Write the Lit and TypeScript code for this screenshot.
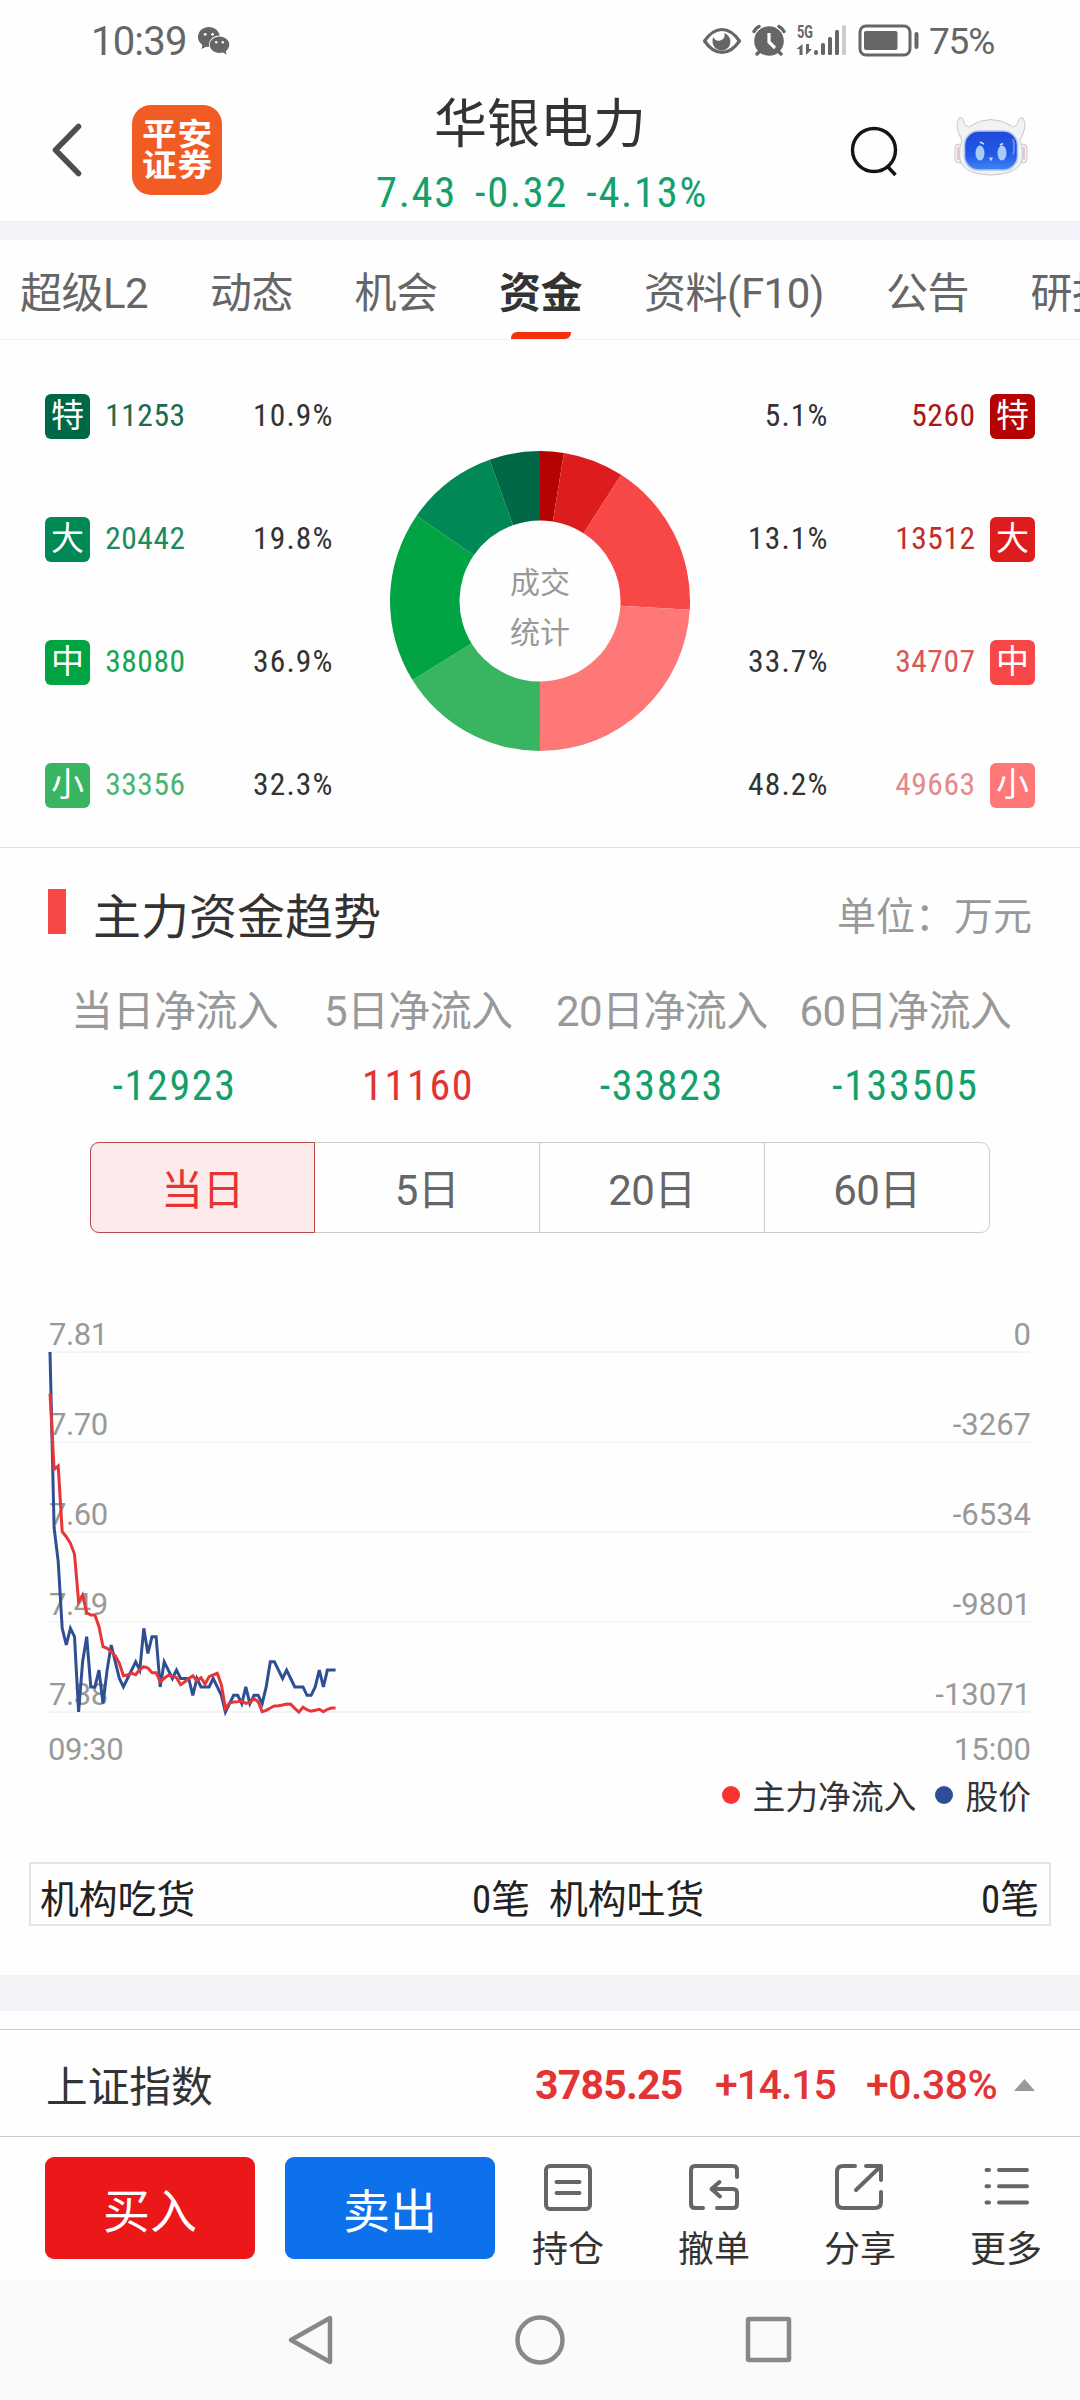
import { LitElement, html, svg, css } from 'lit';
import { customElement, property } from 'lit/decorators.js';
import { classMap } from 'lit/directives/class-map.js';

interface FlowItem {
  tag: string;
  value: number;
  percent: string;
  color: string;
  text: string;
}

const OUTFLOW: FlowItem[] = [
  { tag: '特', value: 11253, percent: '10.9%', color: '#006747', text: '#1a6b4f' },
  { tag: '大', value: 20442, percent: '19.8%', color: '#008855', text: '#1c8a5e' },
  { tag: '中', value: 38080, percent: '36.9%', color: '#00a443', text: '#18a553' },
  { tag: '小', value: 33356, percent: '32.3%', color: '#39b562', text: '#4bb56e' },
];

const INFLOW: FlowItem[] = [
  { tag: '特', value: 5260, percent: '5.1%', color: '#b50303', text: '#a81717' },
  { tag: '大', value: 13512, percent: '13.1%', color: '#dd1c1e', text: '#c22e2e' },
  { tag: '中', value: 34707, percent: '33.7%', color: '#f84747', text: '#dd5656' },
  { tag: '小', value: 49663, percent: '48.2%', color: '#ff7878', text: '#e58a8a' },
];

// one sample per minute, from 09:30
const PRICES = [
  7.81, 7.6, 7.56, 7.48, 7.46, 7.48, 7.47, 7.38, 7.44, 7.47, 7.41, 7.41, 7.43, 7.39, 7.43, 7.46, 7.44, 7.42,
  7.41, 7.42, 7.43, 7.44, 7.43, 7.48, 7.45, 7.47, 7.47, 7.41, 7.44, 7.43, 7.42, 7.43, 7.42, 7.42, 7.42, 7.4,
  7.42, 7.41, 7.41, 7.41, 7.42, 7.41, 7.4, 7.38, 7.39, 7.4, 7.4, 7.39, 7.41, 7.39, 7.4, 7.4, 7.39, 7.41,
  7.44, 7.44, 7.43, 7.42, 7.43, 7.42, 7.41, 7.41, 7.41, 7.4, 7.4, 7.41, 7.43, 7.41, 7.43, 7.43, 7.43,
];

const NET_INFLOW = [
  -1501, -4260, -4139, -6524, -6705, -6947, -7334, -9065, -8823, -9464, -9549, -9549, -9973, -10699, -10760,
  -10881, -11038, -11304, -11752, -11728, -11667, -11716, -11522, -11425, -11474, -11643, -11643, -11970,
  -11849, -11740, -11776, -11825, -12079, -11982, -11861, -11752, -11934, -11825, -12055, -11788, -11728,
  -11667, -12091, -12938, -12744, -12708, -12696, -12672, -12757, -12720, -12587, -12696, -13059, -13011,
  -12926, -12853, -12841, -12817, -12781, -12793, -12938, -13071, -12902, -12986, -13047, -13011, -12974,
  -13059, -12974, -12926, -12926,
];

@customElement('flow-donut')
export class FlowDonut extends LitElement {
  @property({ attribute: false })
  items: FlowItem[] = [];

  static styles = css`
    :host {
      display: grid;
      width: 300px;
      height: 300px;
    }

    svg,
    .caption {
      grid-area: 1 / 1;
    }

    .caption {
      place-self: center;
      width: 64px;
      padding-top: 14px;
      font-size: 30px;
      line-height: 50px;
      text-align: center;
      color: #999;
    }
  `;

  private slice(from: number, to: number, color: string) {
    const at = (turn: number, r: number) =>
      `${150 + r * Math.sin(turn * 2 * Math.PI)} ${150 - r * Math.cos(turn * 2 * Math.PI)}`;
    return svg`<path fill=${color} d="M${at(from, 150)} A150 150 0 0 1 ${at(to, 150)} L${at(to, 80.5)} A80.5 80.5 0 0 0 ${at(from, 80.5)} Z"></path>`;
  }

  render() {
    const total = this.items.reduce((sum, item) => sum + item.value, 0);
    let turn = 0;
    return html`
      <svg width="300" height="300" viewBox="0 0 300 300">
        ${this.items.map((item) => {
          const from = turn;
          turn += item.value / total;
          return this.slice(from, turn, item.color);
        })}
      </svg>
      <div class="caption">成交统计</div>
    `;
  }
}

@customElement('trend-chart')
export class TrendChart extends LitElement {
  static styles = css`
    :host {
      display: block;
      height: 450px;
    }

    svg {
      overflow: visible;
    }

    .grid {
      stroke: #f5f5f5;
      stroke-width: 2;
    }

    .axis {
      fill: #999;
      font-size: 31px;
      letter-spacing: -0.4px;
    }

    .end {
      text-anchor: end;
      letter-spacing: 0;
    }

    .line {
      fill: none;
      stroke-width: 3;
      stroke-linejoin: miter;
    }

    .price {
      stroke: #2f4f93;
    }

    .inflow {
      stroke: #e73538;
    }
  `;

  private points(values: number[], max: number, min: number): string {
    return values.map((v, i) => `${(2 + i * 4.08).toFixed(1)},${(32 + ((max - v) / (max - min)) * 360).toFixed(1)}`).join(' ');
  }

  render() {
    const left = ['7.81', '7.70', '7.60', '7.49', '7.38'];
    const right = ['0', '-3267', '-6534', '-9801', '-13071'];
    return html`
      <svg width="984" height="450" viewBox="0 0 984 450">
        ${left.map(
          (label, i) => svg`
            <line class="grid" x1="0" x2="983" y1=${32 + i * 90} y2=${32 + i * 90}></line>
            <text class="axis" x="1" y=${24.5 + i * 90}>${label}</text>
            <text class="axis end" x="983" y=${24.5 + i * 90}>${right[i]}</text>
          `
        )}
        <text class="axis" x="0" y="440">09:30</text>
        <text class="axis end" x="983" y="440">15:00</text>
        <polyline class="line price" points=${this.points(PRICES, 7.81, 7.38)}></polyline>
        <polyline class="line inflow" points=${this.points(NET_INFLOW, 0, -13071)}></polyline>
      </svg>
    `;
  }
}

@customElement('app-root')
export class AppRoot extends LitElement {
  @property({ type: String })
  activeTab = '资金';

  @property({ type: String })
  period = '当日';

  private tabs = [
    { name: '超级L2', width: 130 },
    { name: '动态', width: 84 },
    { name: '机会', width: 84 },
    { name: '资金', width: 84 },
    { name: '资料(F10)', width: 182 },
    { name: '公告', width: 84 },
    { name: '研报', width: 84 },
  ];

  private summary = [
    { label: '当日净流入', value: -12923 },
    { label: '5日净流入', value: 11160 },
    { label: '20日净流入', value: -33823 },
    { label: '60日净流入', value: -133505 },
  ];

  static styles = css`
    :host {
      display: flex;
      flex-direction: column;
      width: 1080px;
      height: 2400px;
      overflow: hidden;
      background: #fefefe;
      color: #333;
      font-family: Roboto, 'Noto Sans CJK SC', sans-serif;
    }

    * {
      box-sizing: border-box;
    }

    svg {
      display: block;
      flex: none;
    }

    .status {
      display: flex;
      align-items: center;
      height: 81px;
      padding: 0 84px 0 91px;
      color: #666;
    }

    .time {
      width: 107px;
      padding-top: 1px;
      font-size: 40px;
      letter-spacing: -0.8px;
    }

    .status-icons {
      margin-left: auto;
    }

    .battery-text {
      width: 67px;
      margin-left: 9px;
      padding-top: 1px;
      font-size: 37px;
      letter-spacing: -1.2px;
    }

    .header {
      display: grid;
      grid-template-columns: 132px 247px 322px 150px 1fr;
      height: 140px;
    }

    .back {
      padding: 41px 0 0 50px;
    }

    .logo {
      width: 90px;
      height: 90px;
      margin-top: 24px;
      padding: 14px 0 0 10px;
      border-radius: 19px;
      background: #f15b24;
    }

    .logo-text {
      width: 68px;
      color: #fff;
      font-size: 31px;
      font-weight: 700;
      line-height: 31px;
      letter-spacing: 0.8px;
      transform: scaleX(1.12);
      transform-origin: left;
      white-space: nowrap;
    }

    .title {
      text-align: center;
    }

    .name {
      height: 84px;
      font-size: 53px;
      line-height: 89px;
    }

    .quote {
      display: flex;
      justify-content: center;
      gap: 18px;
      padding-left: 4px;
      font-size: 42.5px;
      font-stretch: 75%;
      line-height: 56px;
      letter-spacing: 1.7px;
      white-space: nowrap;
    }

    .down {
      color: #14a06a;
    }

    .up {
      color: #e23434;
    }

    .search {
      padding: 43px 0 0 147px;
    }

    .robot {
      padding: 34px 0 0 102px;
    }

    .band {
      flex: none;
      height: 19px;
      border-top: 1px solid #edeef2;
      background: #f3f4f9;
    }

    .tabs {
      display: flex;
      gap: 60.5px;
      height: 100px;
      padding-left: 19px;
      border-bottom: 1px solid #f0f0f0;
      overflow: hidden;
    }

    .tab {
      display: flex;
      flex: none;
      flex-direction: column;
      align-items: center;
      justify-content: space-between;
      font-size: 42px;
      line-height: 95px;
      padding-top: 6px;
      letter-spacing: -0.5px;
      color: #666;
      white-space: nowrap;
    }

    .tab.active {
      color: #333;
      font-weight: 700;
    }

    .tab.active span {
      height: 86px;
    }

    .tab.active::after {
      content: '';
      width: 60px;
      height: 7px;
      border-radius: 6px 0 6px 0;
      background: #f5310c;
    }

    .flows {
      display: grid;
      grid-template-columns: 345px 390px 345px;
      height: 508px;
      border-bottom: 1px solid #e0e0e0;
    }

    .flow-list {
      display: flex;
      flex-direction: column;
      gap: 78px;
      padding: 54px 0 0 45px;
    }

    .flow {
      display: grid;
      grid-template-columns: 45px 95.5px 148px;
      align-items: center;
      height: 45px;
      font-size: 31.5px;
      font-stretch: 75%;
      letter-spacing: 0.5px;
      text-align: right;
    }

    .flow.in {
      grid-template-columns: 93.5px 147px 59.5px;
    }

    .flow-list.in {
      padding: 54px 45px 0 0;
    }

    .flow-value,
    .flow-percent {
      height: 45px;
      line-height: 43px;
    }

    .flow-percent {
      letter-spacing: 1.1px;
    }

    .badge {
      width: 45px;
      height: 45px;
      border-radius: 6px;
      color: #fff;
      font-size: 33px;
      line-height: 43px;
      letter-spacing: 0;
      text-align: center;
    }

    .in .badge {
      justify-self: end;
    }

    flow-donut {
      justify-self: center;
      margin-top: 111px;
    }

    .section-head {
      display: flex;
      align-items: center;
      height: 135px;
      padding: 0 48px 5px;
      font-size: 48px;
    }

    .section-head::before {
      content: '';
      width: 18px;
      height: 45px;
      margin: 0 27px 3px 0;
      background: #f84747;
    }

    .unit {
      margin-left: auto;
      font-size: 39px;
      color: #999;
    }

    .summary {
      display: grid;
      grid-template-columns: repeat(4, 243.6px);
      justify-content: center;
      height: 159px;
      text-align: center;
    }

    .summary-label {
      font-size: 42px;
      line-height: 58px;
      letter-spacing: -0.6px;
      color: #999;
      white-space: nowrap;
    }

    .summary-value {
      font-size: 42px;
      font-stretch: 75%;
      line-height: 90px;
      letter-spacing: 1.7px;
    }

    .periods {
      display: grid;
      grid-template-columns: 224px 225px 225px 224px;
      grid-template-rows: 89px;
      height: 91px;
      margin: 0 90px;
      border: 1px solid #ccc;
      border-radius: 9px;
    }

    .period {
      border-right: 1px solid #ccc;
      font-size: 42px;
      line-height: 96px;
      text-align: center;
      letter-spacing: -0.5px;
      color: #666;
    }

    .period:last-child {
      border-right: none;
    }

    .period.active {
      height: 91px;
      margin: -1px 0 0 -1px;
      border: 1px solid #b84a4c;
      border-radius: 9px 0 0 9px;
      background: #fdeaea;
      color: #e63434;
    }

    trend-chart {
      margin: 87px 48px 0;
    }

    .legend {
      display: flex;
      align-items: center;
      justify-content: flex-end;
      height: 50px;
      padding: 0 49px 1px 0;
      font-size: 32.8px;
    }

    .dot {
      width: 18px;
      height: 18px;
      margin: 0 12px 0 19px;
      border-radius: 50%;
    }

    .dot.red {
      background: #f93232;
    }

    .dot.blue {
      background: #2c4e97;
    }

    .orders {
      display: grid;
      grid-template-columns: 509px 1fr;
      height: 64px;
      margin: 42px 29px 49px;
      border: 2px solid #e3e4e6;
      color: #222;
      font-size: 38.8px;
      font-stretch: 75%;
      line-height: 72px;
    }

    .order {
      display: flex;
      justify-content: space-between;
      height: 60px;
      padding: 0 10px 0 9px;
    }

    .band.lower {
      height: 36px;
      border: none;
      background: #f2f4f8;
    }

    .index {
      display: flex;
      align-items: center;
      height: 108px;
      margin-top: 18px;
      padding: 4px 45px 0 46px;
      border-top: 1px solid #ccc;
      border-bottom: 1px solid #ccc;
      font-size: 41px;
    }

    .index-name {
      padding-bottom: 3px;
      font-size: 41.7px;
    }

    .index-price {
      margin-left: auto;
      width: 180px;
      font-weight: 700;
      letter-spacing: -0.8px;
    }

    .index-change {
      width: 151px;
      font-weight: 500;
      letter-spacing: -1.1px;
    }

    .index-rate {
      width: 148px;
      font-weight: 500;
      letter-spacing: -0.5px;
    }

    .actions {
      display: grid;
      grid-template-columns: 210px 210px 1fr;
      column-gap: 30px;
      height: 143px;
      padding: 20px 0 0 45px;
    }

    .trade {
      height: 102px;
      border-radius: 9px;
      color: #fff;
      font-size: 47px;
      line-height: 109px;
      text-align: center;
    }

    .buy {
      background: #eb1719;
    }

    .sell {
      background: #0e71ec;
    }

    .tools {
      display: grid;
      grid-template-columns: repeat(4, 1fr);
      margin: 0 1px 0 -30px;
    }

    .tool {
      display: flex;
      flex-direction: column;
      align-items: center;
      padding-top: 6px;
      font-size: 36px;
      line-height: 74px;
    }

    .nav {
      display: flex;
      flex: 1;
      justify-content: center;
      gap: 177px;
      padding-top: 34px;
      background: #fafafa;
    }

    .nav svg {
      fill: none;
      stroke: #888;
      stroke-width: 4.500;
      stroke-linejoin: round;
    }

    .stroke-icon {
      fill: none;
      stroke: #666;
      stroke-width: 4;
      stroke-linecap: round;
      stroke-linejoin: round;
    }
  `;

  private renderStatus() {
    return html`
      <div class="status">
        <span class="time">10:39</span>
        <svg width="32" height="28" viewBox="0 0 32 28" fill="#666">
          <path d="M11 0C4.900 0 0 4.300 0 10c0 3.400 1.700 6 4.300 7.900L3.600 22l4.500-2.300c1 .3 2 .4 3 .4A10 9.500 0 0 1 21.800 8.600C20.800 3.600 16.500 0 11 0z"></path>
          <path d="M21.500 9.500c-5.500 0-9.800 3.700-9.800 8.300s4.300 8.200 9.800 8.200c1.200 0 2.400-.2 3.400-.5l3.700 2-.8-3.300c2.100-1.500 3.500-3.900 3.500-6.400 0-4.600-4.300-8.300-9.800-8.300z"></path>
          <g fill="#fefefe">
            <circle cx="7.200" cy="7.300" r="1.400"></circle>
            <circle cx="14.600" cy="7.300" r="1.400"></circle>
            <circle cx="18.200" cy="15.300" r="1.200"></circle>
            <circle cx="24.800" cy="15.300" r="1.200"></circle>
          </g>
        </svg>
        <svg class="status-icons" width="217" height="50" viewBox="702 15 217 50" fill="#666">
          <path d="M703.500 40q8-11.500 17.500-11.500T738.500 40q-8 11.500-17.500 11.500T703.500 40z" fill="none" stroke="#666" stroke-width="3.200" stroke-linejoin="round"></path>
          <path d="M723 32a9 9 0 1 1-11.500 8c0-1.500.3-2.500 1-4 1 4 6 5 9.500 2 2-2 2-4.500 1-6z"></path>
          <circle cx="768" cy="40" r="14.800"></circle>
          <path d="M753 30.500q1.500-3.500 5-5M783 30.500q-1.500-3.500-5-5M759 50l-3 3M777 50l3 3" fill="none" stroke="#666" stroke-width="3.400" stroke-linecap="round"></path>
          <path d="M768 32v9l6 6" fill="none" stroke="#fefefe" stroke-width="3.200"></path>
          <text x="796" y="37" font-size="18" font-weight="700" textLength="16" lengthAdjust="spacingAndGlyphs">5G</text>
          <path d="M801.500 43v11h-3v-6h-3zM805 43v11l6-6h-3v-5z"></path>
          <rect x="813" y="49" width="4" height="5" rx="2"></rect>
          <rect x="820" y="42" width="4" height="12" rx="1.500"></rect>
          <rect x="827" y="36" width="4" height="18" rx="1.500"></rect>
          <rect x="834" y="29" width="4" height="25" rx="1.500"></rect>
          <rect x="841" y="24" width="4" height="30" rx="1.500" fill="#ccc"></rect>
          <rect x="859" y="25" width="50" height="29" rx="6" fill="none" stroke="#666" stroke-width="3"></rect>
          <rect x="863" y="30" width="33.500" height="19" rx="2"></rect>
          <rect x="913.500" y="31" width="4" height="17" rx="2"></rect>
        </svg>
        <span class="battery-text">75%</span>
      </div>
    `;
  }

  private renderHeader() {
    return html`
      <div class="header">
        <div class="back">
          <svg width="34" height="56" viewBox="0 0 34 56" fill="none" stroke="#4d4d4d" stroke-width="5.500" stroke-linecap="round" stroke-linejoin="round">
            <path d="M28.500 4.500 5.500 28l23 23.500"></path>
          </svg>
        </div>
        <div class="logo"><div class="logo-text">平安<br />证券</div></div>
        <div class="title">
          <div class="name">华银电力</div>
          <div class="quote down"><span>7.43</span><span>-0.32</span><span>-4.13%</span></div>
        </div>
        <div class="search">
          <svg width="50" height="54" viewBox="0 0 50 54" fill="none" stroke="#151515" stroke-width="3.400">
            <circle cx="26" cy="26" r="21.500"></circle>
            <path d="M40 43l7.500 8"></path>
          </svg>
        </div>
        <div class="robot">
          <svg width="76" height="62" viewBox="0 0 76 62">
            <defs>
              <linearGradient id="face" x1="0" y1="0" x2="0" y2="1">
                <stop offset="0" stop-color="#1f4ad8"></stop>
                <stop offset="0.600" stop-color="#2159e6"></stop>
                <stop offset="1" stop-color="#3f86f5"></stop>
              </linearGradient>
            </defs>
            <g fill="#f1f2f6" stroke="#c6c8d0" stroke-width="1">
              <rect x="2" y="29" width="8" height="19" rx="4"></rect>
              <rect x="66" y="29" width="8" height="19" rx="4"></rect>
              <path d="M9 25Q1 11 6 3q4-1 4.500 3t5 6Q38 -3 60.500 12q4.500-2 5-6T70 3q5 8-3 22 3 7 2.500 16Q69 59 38 60 7 59 6.500 41 6 32 9 25z"></path>
            </g>
            <path d="M5 32v13M71 32v13" stroke="#e3bdb5" stroke-width="1.500"></path>
            <rect x="11.500" y="16" width="53" height="39" rx="14" fill="url(#face)" stroke="#b9c4e6" stroke-width="1.500"></rect>
            <path d="M60 24q2 8 0 16" stroke="#5f8df3" stroke-width="2" fill="none"></path>
            <ellipse cx="27" cy="38" rx="4.500" ry="7.500" fill="#a9cbfa"></ellipse>
            <ellipse cx="49" cy="38" rx="4.500" ry="7.500" fill="#a9cbfa"></ellipse>
            <path d="M27 27l4 2M50 28.500l-3 1.500" stroke="#c5dcfc" stroke-width="1.800"></path>
            <path d="M36 42.500h4l-2 4z" fill="#c5dcfc"></path>
          </svg>
        </div>
      </div>
    `;
  }

  private renderFlow(item: FlowItem, incoming: boolean) {
    const badge = html`<div class="badge" style="background: ${item.color}">${item.tag}</div>`;
    const value = html`<span class="flow-value" style="color: ${item.text}">${item.value}</span>`;
    const percent = html`<span class="flow-percent">${item.percent}</span>`;
    return incoming
      ? html`<div class="flow in">${percent}${value}${badge}</div>`
      : html`<div class="flow">${badge}${value}${percent}</div>`;
  }

  private renderTools() {
    return html`
      <div class="tools">
        <div class="tool">
          <svg class="stroke-icon" width="50" height="50" viewBox="0 0 50 50">
            <rect x="3" y="3" width="44" height="43" rx="4"></rect>
            <path d="M13.500 19h23M13.500 30h23"></path>
          </svg>
          持仓
        </div>
        <div class="tool">
          <svg class="stroke-icon" width="50" height="50" viewBox="0 0 50 50">
            <path d="M48 14V7q0-4-4-4H6Q2 3 2 7v34q0 4 4 4h8M31 33.500 22.500 26l8-7M22.500 26H44q4 0 4 4v11q0 4-4 4H28"></path>
          </svg>
          撤单
        </div>
        <div class="tool">
          <svg class="stroke-icon" width="50" height="50" viewBox="0 0 50 50">
            <path d="M20 3H8Q2 3 2 9v30q0 6 6 6h32q6 0 6-6V29M31 3h15v14M46 3 21 27"></path>
          </svg>
          分享
        </div>
        <div class="tool">
          <svg class="stroke-icon" width="50" height="50" viewBox="0 0 50 50">
            <path d="M5.500 7h2.500M5.500 23.300h2.500M5.500 39.500h2.500M18 7h28M18 23.300h28M18 39.500h28"></path>
          </svg>
          更多
        </div>
      </div>
    `;
  }

  render() {
    return html`
      ${this.renderStatus()} ${this.renderHeader()}
      <div class="band"></div>
      <div class="tabs">
        ${this.tabs.map(
          (tab) => html`
            <div class=${classMap({ tab: true, active: tab.name === this.activeTab })} style="width: ${tab.width}px">
              <span>${tab.name}</span>
            </div>
          `
        )}
      </div>

      <div class="flows">
        <div class="flow-list">${OUTFLOW.map((item) => this.renderFlow(item, false))}</div>
        <flow-donut .items=${[...INFLOW, ...[...OUTFLOW].reverse()]}></flow-donut>
        <div class="flow-list in">${INFLOW.map((item) => this.renderFlow(item, true))}</div>
      </div>

      <div class="section-head">
        <span>主力资金趋势</span>
        <span class="unit">单位：万元</span>
      </div>
      <div class="summary">
        ${this.summary.map(
          (item) => html`
            <div>
              <div class="summary-label">${item.label}</div>
              <div class="summary-value ${item.value < 0 ? 'down' : 'up'}">${item.value}</div>
            </div>
          `
        )}
      </div>
      <div class="periods">
        ${['当日', '5日', '20日', '60日'].map(
          (name) => html`<div class=${classMap({ period: true, active: name === this.period })}>${name}</div>`
        )}
      </div>

      <trend-chart></trend-chart>
      <div class="legend">
        <span class="dot red"></span>主力净流入<span class="dot blue"></span>股价
      </div>

      <div class="orders">
        <div class="order"><span>机构吃货</span><span>0笔</span></div>
        <div class="order"><span>机构吐货</span><span>0笔</span></div>
      </div>
      <div class="band lower"></div>

      <div class="index">
        <span class="index-name">上证指数</span>
        <span class="index-price up">3785.25</span>
        <span class="index-change up">+14.15</span>
        <span class="index-rate up">+0.38%</span>
        <svg width="21" height="12" viewBox="0 0 21 12"><path d="M0 12 10.500 0 21 12z" fill="#999"></path></svg>
      </div>
      <div class="actions">
        <div class="trade buy">买入</div>
        <div class="trade sell">卖出</div>
        ${this.renderTools()}
      </div>

      <div class="nav">
        <svg width="52" height="52" viewBox="0 0 52 52"><path d="M45 4v44L6 26z"></path></svg>
        <svg width="52" height="52" viewBox="0 0 52 52"><circle cx="26" cy="26" r="22.500"></circle></svg>
        <svg width="52" height="52" viewBox="0 0 52 52"><rect x="5" y="5" width="41" height="41" rx="1"></rect></svg>
      </div>
    `;
  }
}

declare global {
  interface HTMLElementTagNameMap {
    'app-root': AppRoot;
    'flow-donut': FlowDonut;
    'trend-chart': TrendChart;
  }
}
